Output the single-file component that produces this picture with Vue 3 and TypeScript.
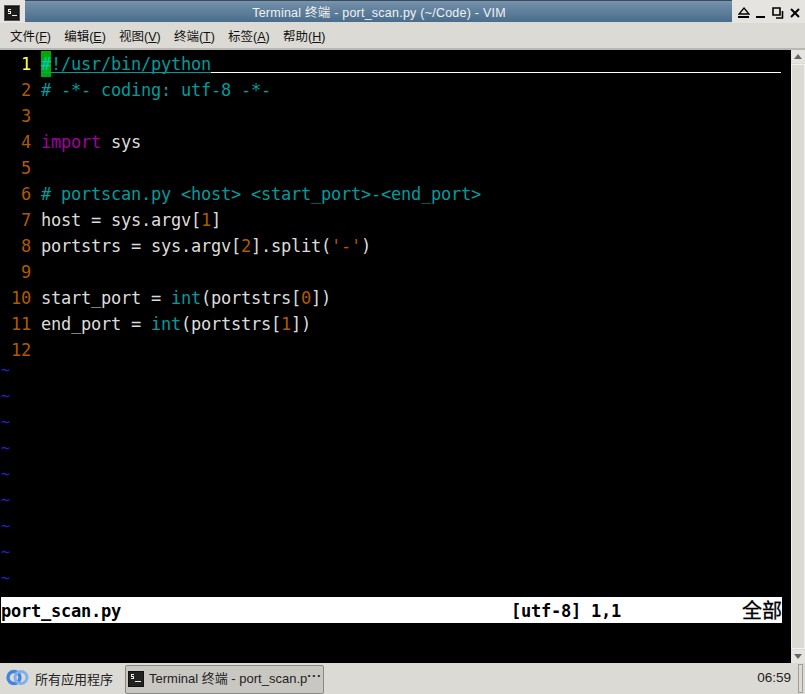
<script setup lang="ts">
type Seg = { t: string; c?: string };
const rows: { n: string; segs: Seg[] }[] = [
  { n: '  2 ', segs: [{ t: '# -*- coding: utf-8 -*-', c: 'teal' }] },
  { n: '  3 ', segs: [] },
  { n: '  4 ', segs: [{ t: 'import', c: 'purple' }, { t: ' sys' }] },
  { n: '  5 ', segs: [] },
  { n: '  6 ', segs: [{ t: '# portscan.py <host> <start_port>-<end_port>', c: 'teal' }] },
  { n: '  7 ', segs: [{ t: 'host = sys.argv[' }, { t: '1', c: 'orange' }, { t: ']' }] },
  { n: '  8 ', segs: [{ t: 'portstrs = sys.argv[' }, { t: '2', c: 'orange' }, { t: '].split(' }, { t: "'-'", c: 'orange' }, { t: ')' }] },
  { n: '  9 ', segs: [] },
  { n: ' 10 ', segs: [{ t: 'start_port = ' }, { t: 'int', c: 'teal' }, { t: '(portstrs[' }, { t: '0', c: 'orange' }, { t: '])' }] },
  { n: ' 11 ', segs: [{ t: 'end_port = ' }, { t: 'int', c: 'teal' }, { t: '(portstrs[' }, { t: '1', c: 'orange' }, { t: '])' }] },
  { n: ' 12 ', segs: [] },
];
const first = '  1 ';
const tildes = 9;
const menus = [
  ['文件(', 'F', ')'], ['编辑(', 'E', ')'], ['视图(', 'V', ')'],
  ['终端(', 'T', ')'], ['标签(', 'A', ')'], ['帮助(', 'H', ')'],
];
</script>

<template>
  <div class="desk">
    <header class="titlebar">
      <div class="appicon">
        <svg width="16" height="16" viewBox="0 0 16 16"><rect x="0.5" y="0.5" width="15" height="15" fill="#2b2b2b" stroke="#555"/><rect x="1.5" y="1.5" width="13" height="13" fill="#1c1c1c" stroke="#111"/><path d="M4 4h3v1H5v1h2v3H4V8h2V7H4zM8 10h5v1H8z" fill="#eee"/></svg>
      </div>
      <div class="title">Terminal 终端 - port_scan.py (~/Code) - VIM</div>
      <div class="winbtns">
        <svg width="12" height="12" viewBox="0 0 12 12"><path d="M6 1l5 6H1z" fill="none" stroke="#000" stroke-width="1.3"/><path d="M0 9h11v2H0z" fill="#000"/></svg>
        <svg width="10" height="12" viewBox="0 0 10 12"><path d="M0 9h9v2H0z" fill="#000"/></svg>
        <svg width="12" height="12" viewBox="0 0 12 12"><path d="M1 1h7v7H1z" fill="none" stroke="#000" stroke-width="1.6"/><path d="M10.5 4v7H4" fill="none" stroke="#000" stroke-width="1.6"/></svg>
        <svg width="10" height="10" viewBox="0 0 10 10"><path d="M1 1l8 8M9 1l-8 8" stroke="#000" stroke-width="2"/></svg>
      </div>
    </header>
    <nav class="menubar">
      <span v-for="m in menus" :key="m[1]" class="menu">{{ m[0] }}<u>{{ m[1] }}</u>{{ m[2] }}</span>
    </nav>
    <main class="main">
      <div class="term">
        <div class="row first"><span class="yellow">{{ first }}</span><span class="cursor">#</span><span class="teal">!/usr/bin/python</span></div>
        <div v-for="r in rows" :key="r.n" class="row"><span class="orange">{{ r.n }}</span><span v-for="(s, i) in r.segs" :key="i" :class="s.c">{{ s.t }}</span></div>
        <div v-for="i in tildes" :key="i" class="row"><span class="tilde">~</span></div>
        <div class="status"><span>port_scan.py</span><span class="pos">[utf-8] 1,1</span><span class="all">全部</span></div>
      </div>
      <aside class="scroll">
        <div class="sbtn"><i class="up"></i></div>
        <div class="thumb"></div>
        <div class="sbtn"><i class="down"></i></div>
      </aside>
    </main>
    <footer class="taskbar">
      <div class="start">
        <svg width="23" height="17" viewBox="0 0 23 17"><circle cx="8" cy="8.5" r="6" fill="none" stroke="#3f86dc" stroke-width="3.4"/><circle cx="15" cy="8.5" r="6" fill="none" stroke="#7fb2ec" stroke-width="3"/></svg>
        <span>所有应用程序</span>
      </div>
      <div class="task">
        <svg width="16" height="16" viewBox="0 0 16 16"><rect x="0.5" y="0.5" width="15" height="15" fill="#222" stroke="#111"/><path d="M3 3h3v1H4v1h2v3H3V7h2V6H3zM7 10h6v1H7z" fill="#eee"/></svg>
        <span class="tasktext">Terminal 终端 - port_scan.p<span class="dots">···</span></span>
      </div>
      <div class="clock">06:59</div>
      <div class="grip"></div>
    </footer>
  </div>
</template>

<style>
body { margin: 0; background: #dcdad5; }
</style>

<style scoped>
.desk { width: 805px; height: 694px; display: flex; flex-direction: column; overflow: hidden; background: #dcdad5; font-family: "Liberation Sans", "Noto Sans CJK SC", sans-serif; }
.titlebar { height: 23px; flex: none; display: flex; align-items: center; background: linear-gradient(#7f9bb4 0, #6d8ba6 4px, #4a6d8d 22px, #dcdad5 22px); box-shadow: inset 0 1px 0 #3b4a58; }
.appicon { width: 25px; height: 23px; flex: none; display: flex; align-items: center; justify-content: center; background: #e6e4e0; box-sizing: border-box; padding: 2px 2px 0 0; }
.title { flex: 1; text-align: center; font-size: 12.5px; letter-spacing: 0.23px; color: #f2f2f2; padding-bottom: 1px; padding-left: 1px; }
.winbtns { width: 73px; height: 23px; flex: none; display: flex; align-items: center; justify-content: space-between; box-sizing: border-box; padding: 2px 5px 0 6px; background: #e6e4e0; }
.menubar { height: 27px; flex: none; display: flex; align-items: center; padding-left: 10px; gap: 13.2px; box-sizing: border-box; font-size: 12.5px; color: #111; border-bottom: 2px solid #b9b7b1; }
.menu u { text-underline-offset: 1px; }
.main { flex: 1; display: flex; min-height: 0; }
.term { flex: 1; background: #000; padding: 1px 9px 0 1px; font-family: "DejaVu Sans Mono", "Noto Sans CJK SC", monospace; font-size: 17px; letter-spacing: -0.234px; color: #dcdcdc; }
.row { height: 26px; line-height: 26px; white-space: pre; position: relative; }
.first::after { content: ""; position: absolute; left: 40px; right: 1px; top: 21px; height: 1px; background: linear-gradient(to right, #009c9c 170px, #fff 170px); }
.cursor { background: #00aa00; color: #00c8c8; display: inline-block; width: 10px; height: 26px; vertical-align: top; }
.teal { color: #009c9c; }
.purple { color: #a000a0; }
.orange { color: #b05a00; }
.yellow { color: #ffff55; }
.tilde { color: #2222dd; display: block; line-height: 14px; font-size: 15px; }
.status { height: 26px; line-height: 28px; background: #fff; color: #000; font-weight: 700; display: flex; position: relative; white-space: pre; }
.pos { position: absolute; left: 510px; }
.all { position: absolute; right: 0; font-size: 20px; letter-spacing: 0; font-weight: 400; -webkit-text-stroke: 0.3px #000; }
.scroll { width: 14px; flex: none; display: flex; flex-direction: column; background: #dcdad5; }
.sbtn { height: 13px; display: flex; align-items: center; justify-content: center; background: #e6e4e0; }
.thumb { flex: 1; margin: 1px 0; background: #dcdad5; border: 1px solid #f2f1ee; }
.up { border: 4px solid transparent; border-top: 0; border-bottom: 5px solid #666; }
.down { border: 4px solid transparent; border-bottom: 0; border-top: 5px solid #666; }
.taskbar { height: 31px; flex: none; display: flex; align-items: center; background: #dcdad5; font-size: 13px; color: #222; }
.start { display: flex; align-items: center; gap: 6px; padding: 0 0 2px 6px; width: 118px; flex: none; }
.start span { margin-top: 1px; }
.task { display: flex; align-items: center; gap: 5px; width: 199px; height: 29px; box-sizing: border-box; padding-left: 2px; margin-left: 1px; margin-top: 1px; border: 1px solid #8a8882; border-radius: 2px; background: #c9c7c2; white-space: nowrap; overflow: hidden; }
.tasktext { position: relative; top: -2px; }
.dots { letter-spacing: 0.5px; font-weight: 700; position: relative; top: -3px; }
.clock { margin-left: auto; font-size: 13.5px; padding-bottom: 2px; }
.grip { width: 3px; height: 27px; margin: 0 2px 0 7px; border: 1px solid #a09e98; }
</style>
